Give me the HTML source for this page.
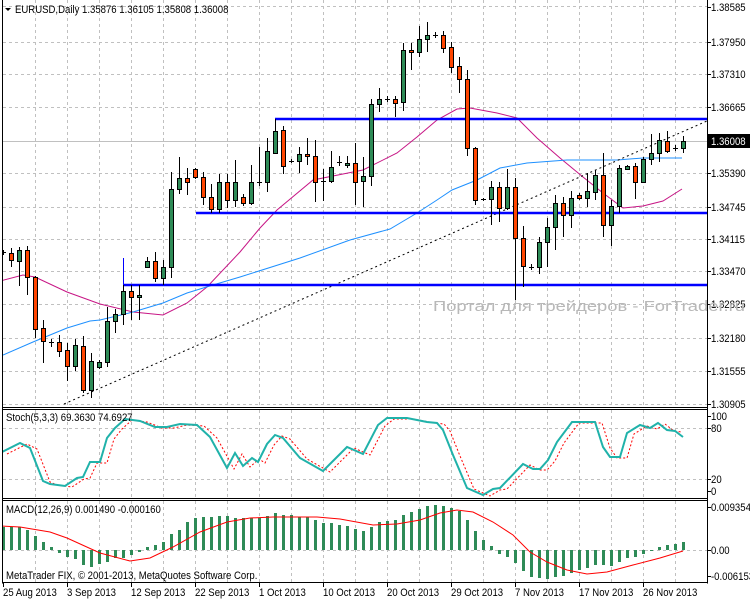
<!DOCTYPE html>
<html><head><meta charset="utf-8"><style>
html,body{margin:0;padding:0;background:#fff;width:750px;height:600px;overflow:hidden}
svg{display:block}
text{font-family:"Liberation Sans",sans-serif;font-size:11px;fill:#000}
</style></head><body>
<svg id="s" width="750" height="600" viewBox="0 0 750 600" xmlns="http://www.w3.org/2000/svg">
<defs>
<clipPath id="cm"><rect x="3" y="0" width="704" height="407"/></clipPath>
<clipPath id="cs"><rect x="3" y="409" width="704" height="89"/></clipPath>
<clipPath id="cd"><rect x="3" y="501" width="704" height="81"/></clipPath>
</defs>
<g id="grid" stroke="#c0c0c0" stroke-dasharray="3,3" stroke-width="1"></g>
<g id="main" clip-path="url(#cm)"></g>
<g id="sto" clip-path="url(#cs)"></g>
<g id="mac" clip-path="url(#cd)"></g>
<g fill="none" stroke="#000" stroke-width="1">
<path d="M2.5 0V583.5M707.5 0V583.5M2.5 407.5H707.5M2.5 409.5H707.5M2.5 498.5H707.5M2.5 500.5H707.5M2.5 582.5H707.5"/>
</g>
<g id="ticks" stroke="#000"></g>
<polygon points="5,8 11,8 8,11" fill="#000"/>
<g class="sq">
<text x="15" y="13">EURUSD,Daily  1.35876 1.36105 1.35808 1.36008</text>
<text x="6" y="421">Stoch(5,3,3) 69.3630 74.6927</text>
<text x="6" y="513">MACD(12,26,9) 0.001490 -0.000160</text>
<text x="6" y="579">MetaTrader FIX, © 2001-2013, MetaQuotes Software Corp.</text>
<text x="711" y="11">1.38585</text>
<text x="711" y="46">1.37950</text>
<text x="711" y="78">1.37310</text>
<text x="711" y="111">1.36665</text>
<text x="711" y="177">1.35390</text>
<text x="711" y="211">1.34745</text>
<text x="711" y="243">1.34115</text>
<text x="711" y="275">1.33470</text>
<text x="711" y="308">1.32825</text>
<text x="711" y="342">1.32180</text>
<text x="711" y="375">1.31555</text>
<text x="711" y="408">1.30905</text>
</g>
<rect x="708" y="134" width="42" height="14" fill="#000"/>
<g class="sq">
<text x="711" y="145" style="fill:#fff">1.36008</text>
<text x="711" y="420">100</text>
<text x="711" y="432">80</text>
<text x="711" y="483">20</text>
<text x="711" y="495">0</text>
<text x="711" y="511">0.009354</text>
<text x="711" y="554">0.00</text>
<text x="711" y="580">-0.006153</text>
<text x="3" y="596">25 Aug 2013</text>
<text x="67" y="596">3 Sep 2013</text>
<text x="131" y="596">12 Sep 2013</text>
<text x="195" y="596">22 Sep 2013</text>
<text x="259" y="596">1 Oct 2013</text>
<text x="323" y="596">10 Oct 2013</text>
<text x="387" y="596">20 Oct 2013</text>
<text x="451" y="596">29 Oct 2013</text>
<text x="515" y="596">7 Nov 2013</text>
<text x="579" y="596">17 Nov 2013</text>
<text x="643" y="596">26 Nov 2013</text>
</g>
<text x="433" y="311" textLength="312" lengthAdjust="spacingAndGlyphs" style="font-size:15px;fill:#b8b8b8">Портал для трейдеров - ForTrader.ru</text>
</svg>
<script>
var NS="http://www.w3.org/2000/svg";
function el(p,t,a){var e=document.createElementNS(NS,t);for(var k in a)e.setAttribute(k,a[k]);document.getElementById(p).appendChild(e);return e;}
var g="";
for(var k=1;k<=21;k++){var x=3.5+32*k;g+="M"+x+" 0V407M"+x+" 410V498M"+x+" 501V582";}
[6,42,74,107,173,207,239,271,304,338,371,404].forEach(function(y){g+="M3 "+(y+.5)+"H707";});
[428,479,550].forEach(function(y){g+="M3 "+(y+.5)+"H707";});
el("grid","path",{d:g});
var t="";
[7,42,74,107,141,173,207,239,271,304,338,371,404,416,428,479,491,507,550,576].forEach(function(y){t+="M707 "+(y+.5)+"H711";});
for(var k=0;k<=10;k++){t+="M"+(3.5+64*k)+" 583V587";}
el("ticks","path",{d:t,fill:"none"});
el("main","path",{d:"M3 141.5H707",stroke:"#c0c0c0"});
function pl(p,pts,a){a.d="M"+pts.map(function(q){return q.join(" ")}).join("L");a.fill="none";return el(p,"path",a);}
pl("main",[[0,281],[23,275],[35,277],[67,292],[100,304],[133,312],[163,315],[187,303],[207,287],[240,252],[260,228],[277,210],[313,180],[343,174],[363,170],[397,153],[417,137],[437,120],[457,109],[470,108],[497,113],[517,118],[537,138],[560,158],[583,177],[603,193],[623,208],[643,206],[663,201],[682,189]],{stroke:"#c71585"});
pl("main",[[3,355],[33,342],[67,328],[90,321],[100,320],[133,312],[163,303],[187,293],[213,285],[240,277],[300,258],[350,240],[390,229],[417,213],[437,200],[452,190],[477,180],[500,168],[527,163],[567,160],[617,160],[643,158],[682,158]],{stroke:"#1e90ff"});
el("main","path",{d:"M64 404L707 121",stroke:"#000","stroke-dasharray":"2,3",fill:"none"});
el("main","path",{d:"M123 285H707M196 213H707M275 119H707",stroke:"#0000ff","stroke-width":"2.5",fill:"none"});
el("main","path",{d:"M123.5 285V258M275.5 119V131",stroke:"#0000ff","stroke-width":"1",fill:"none"});
var C=[[252,253,250,255,'d'],[253,260,248,267,'r'],[250,261,247,286,'g'],[250,277,246,295,'r'],[277,329,276,338,'r'],[328,341,320,363,'r'],[342,342,339,347,'d'],[342,351,335,357,'r'],[350,366,343,381,'r'],[345,366,339,371,'g'],[346,390,336,393,'r'],[361,390,353,398,'g'],[362,367,360,369,'g'],[321,362,307,367,'g'],[314,321,309,333,'g'],[291,314,285,325,'g'],[291,297,285,320,'r'],[295,297,285,320,'g'],[261,267,257,268,'g'],[261,278,252,282,'r'],[267,278,260,285,'g'],[189,267,172,278,'g'],[178,189,157,194,'g'],[178,182,168,195,'r'],[169,177,168,179,'r'],[177,197,172,205,'r'],[197,209,184,213,'r'],[182,209,174,213,'g'],[182,200,174,208,'r'],[182,200,160,207,'g'],[197,203,194,206,'r'],[182,203,165,205,'g'],[182,182,147,186,'d'],[151,182,138,192,'g'],[131,153,119,154,'g'],[130,166,126,174,'r'],[161,161,159,163,'d'],[154,161,147,173,'g'],[154,156,138,165,'r'],[156,182,140,202,'r'],[181,181,169,201,'d'],[167,181,151,183,'g'],[162,162,156,166,'d'],[163,165,156,168,'g'],[163,182,143,205,'r'],[176,181,157,207,'g'],[104,176,99,186,'g'],[99,104,88,112,'g'],[99,99,96,102,'d'],[99,103,96,117,'r'],[50,102,43,111,'g'],[50,52,43,70,'r'],[39,52,26,57,'g'],[35,39,22,52,'g'],[35,35,32,38,'d'],[35,48,31,53,'r'],[47,67,42,73,'r'],[66,79,57,93,'r'],[79,148,70,156,'r'],[148,200,147,205,'r'],[199,199,198,201,'d'],[187,199,181,225,'g'],[187,208,182,222,'r'],[187,208,169,210,'g'],[187,238,178,300,'r'],[238,266,226,287,'r'],[267,267,264,270,'d'],[242,267,237,274,'g'],[227,242,218,267,'g'],[203,227,195,250,'g'],[203,215,197,237,'r'],[198,215,191,228,'g'],[195,198,193,200,'r'],[191,198,173,207,'g'],[175,192,170,200,'g'],[175,225,153,237,'r'],[206,225,200,246,'g'],[168,206,165,213,'g'],[166,169,165,170,'g'],[166,182,163,199,'r'],[159,182,157,183,'g'],[153,159,134,165,'g'],[140,153,133,162,'g'],[141,151,131,153,'r'],[148,148,145,151,'d'],[141,148,136,153,'g']];
C.forEach(function(c,i){var x=3+8*i;
el("main","path",{d:"M"+(x+.5)+" "+c[2]+"V"+c[3],stroke:"#000"});
if(c[4]=='d'){el("main","path",{d:"M"+(x-2)+" "+(c[0]+.5)+"H"+(x+3),stroke:"#000"});}
else{el("main","rect",{x:x-1.5,y:c[0]+.5,width:4,height:Math.max(1,c[1]-c[0]),fill:c[4]=='g'?"#2e8b57":"#ff4500",stroke:"#000"});}
});
var S=[[0,453],[20,443],[30,448],[43,481],[50,484],[65,486],[77,478],[83,477],[90,462],[100,462],[107,438],[115,428],[125,419],[140,421],[155,427],[167,427],[180,424],[197,425],[210,437],[227,468],[235,453],[243,466],[252,458],[258,462],[267,444],[275,435],[283,438],[300,458],[323,471],[340,454],[347,447],[363,454],[378,425],[387,418],[407,418],[427,422],[437,423],[443,430],[453,455],[467,488],[483,495],[493,489],[500,488],[523,464],[533,469],[540,469],[548,460],[557,442],[572,422],[595,422],[603,447],[610,457],[620,457],[627,433],[640,425],[650,428],[658,423],[667,430],[675,431],[683,437]];
pl("sto",S.map(function(p){return [p[0]+7,p[1]+1]}).filter(function(p){return p[0]<=684}),{stroke:"#ff0000","stroke-dasharray":"2,2"});
pl("sto",S,{stroke:"#20b2aa","stroke-width":"2"});
var H={3:527,11:527,19:527,27:530,35:536,43:542,51:547,59:553,67:557,75:559,83:565,91:567,99:564,107:562,115:558,123:558,131:555,139:552,147:547,155:545,163:542,171:534,179:530,187:522,195:518,203:517,211:517,219:516,227:516,235:518,243:518,251:518,259:518,267:516,275:513,283:515,291:515,299:517,307:517,315:520,323:523,331:523,339:525,347:526,355:529,363:531,371:527,379:522,387:521,395:520,403:515,411:512,419:509,427:506,435:505,443:506,451:508,459:511,467:520,475:531,483:540,491:546,499:554,507:557,515:563,523:571,531:577,539:578,547:579,555:577,563:576,571:573,579:570,587:568,595:565,603:565,611:566,619:562,627:558,635:557,643:554,651:551,659:547,667:545,675:544,683:542};
var hp="";for(var x in H){var y=H[x],a=Math.min(y,550),b=Math.max(y,550);hp+="M"+(+x+.5)+" "+a+"V"+b;}
el("mac","path",{d:hp,stroke:"#2e8b57","stroke-width":"3"});
pl("mac",[[0,526],[20,527],[50,532],[67,538],[100,553],[130,561],[150,558],[173,547],[200,532],[227,522],[250,518],[273,517],[317,517],[340,519],[373,525],[397,524],[420,520],[440,513],[457,510],[473,512],[493,522],[513,535],[530,552],[547,562],[567,570],[587,574],[607,572],[633,565],[660,558],[683,551]],{stroke:"#ff0000"});
document.querySelectorAll(".sq text").forEach(function(e){try{var w=e.getComputedTextLength();e.setAttribute("textLength",(w*0.87).toFixed(1));e.setAttribute("lengthAdjust","spacingAndGlyphs");}catch(z){}});
</script>
</body></html>
